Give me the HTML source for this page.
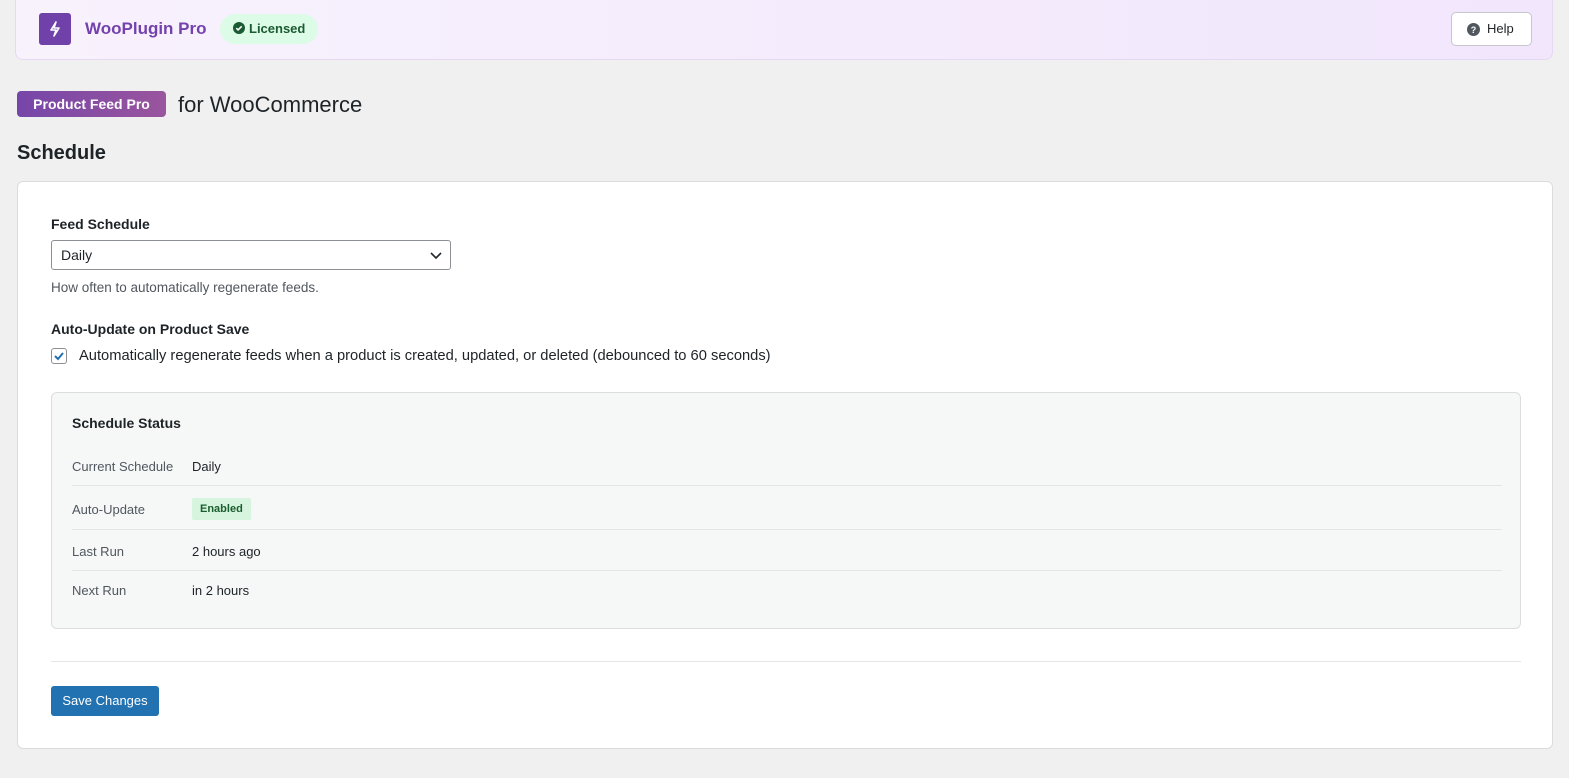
<!DOCTYPE html>
<html><head><style>
*{box-sizing:border-box;margin:0;padding:0}
body{width:1569px;height:778px;background:#f0f0f1;font-family:"Liberation Sans",sans-serif;color:#1d2327;position:relative;overflow:hidden}
.hdr{position:absolute;left:15px;top:0;width:1538px;height:60px;border:1px solid #e6d8f5;border-top:none;border-radius:0 0 8px 8px;background:linear-gradient(90deg,#f8f2fd,#f1e6fc)}
.logo{position:absolute;left:23px;top:13px;width:32px;height:32px;border-radius:3px;background:#7041a8}
.title{position:absolute;left:69px;top:19px;font-size:17px;font-weight:bold;color:#7442ad}
.lic{position:absolute;left:204px;top:14px;height:30px;padding:0 13px 0 13px;border-radius:15px;background:#dcfce7;color:#1c5a32;font-size:13px;font-weight:bold;line-height:30px}
.help{position:absolute;top:12px;right:20px;width:81px;height:34px;background:#fff;border:1px solid #c7c7cc;border-radius:5px;font-size:13px;line-height:32px;padding-left:35px}
.pill{position:absolute;left:17px;top:91px;width:149px;height:26px;border-radius:4px;background:linear-gradient(90deg,#7546a9,#9a559d);color:#fff;font-size:14px;font-weight:bold;line-height:26px;text-align:center}
.forw{position:absolute;left:178px;top:92px;font-size:22px}
h2{position:absolute;left:17px;top:142px;font-size:20px;font-weight:bold}
.card{position:absolute;left:17px;top:181px;width:1536px;height:568px;background:#fff;border:1px solid #dcdcde;border-radius:6px}
.lbl{position:absolute;left:33px;font-size:14px;font-weight:bold}
.sel{position:absolute;left:33px;top:58px;width:400px;height:30px;border:1px solid #8c8f94;border-radius:3px;font-size:14px;line-height:28px;padding-left:9px}
.desc{position:absolute;left:33px;top:98px;font-size:13.5px;color:#50575e}
.cb{position:absolute;left:33px;top:166px;width:16px;height:16px;border:1px solid #8c8f94;border-radius:3px}
.cbt{position:absolute;left:61px;top:166px;font-size:14.7px}
.st{position:absolute;left:33px;top:210px;width:1470px;height:237px;background:#f6f7f7;border:1px solid #dcdcde;border-radius:6px}
.row{position:absolute;left:20px;width:1430px;font-size:13px;border-bottom:1px solid #e5e5e5}
.row span{position:absolute;left:0;color:#50575e}.row b{position:absolute;left:120px;font-weight:normal}
.en{position:absolute;left:120px;top:-4px;background:#d7f5de;color:#1a5d2f;font-size:11px;font-weight:bold;padding:5px 8px;border-radius:2px}
.hr{position:absolute;left:33px;top:479px;width:1470px;border-top:1px solid #e5e5e5}
.btn{position:absolute;left:33px;top:504px;width:108px;height:30px;background:#2271b1;border-radius:3px;color:#fff;font-size:13px;line-height:30px;text-align:center}
</style></head><body>
<div class="hdr">
<div class="logo"><svg width="32" height="32" viewBox="0 0 32 32"><path d="M17 9l-5 8h5l-2 6 5-8h-5z" fill="none" stroke="#fff" stroke-width="1.6" stroke-linejoin="round"/></svg></div>
<div class="title">WooPlugin Pro</div>
<div class="lic"><svg width="12" height="12" viewBox="0 0 12 12" style="vertical-align:-1px;margin-right:4px"><circle cx="6" cy="6" r="6" fill="#1c5a32"/><path d="M3.3 6.2l1.8 1.7 3.6-3.6" stroke="#fff" stroke-width="1.6" fill="none"/></svg>Licensed</div>
<div class="help"><svg width="13" height="13" viewBox="0 0 13 13" style="position:absolute;left:15px;top:10px"><circle cx="6.5" cy="6.5" r="6.5" fill="#50575e"/><text x="6.5" y="10" font-size="9" font-weight="bold" fill="#fff" text-anchor="middle" font-family="Liberation Sans">?</text></svg>Help</div>
</div>
<div class="pill">Product Feed Pro</div>
<div class="forw">for WooCommerce</div>
<h2>Schedule</h2>
<div class="card">
<div class="lbl" style="top:34px">Feed Schedule</div>
<div class="sel">Daily<svg width="12" height="8" viewBox="0 0 12 8" style="position:absolute;right:8px;top:11px"><path d="M1 1l5 5 5-5" stroke="#1d2327" stroke-width="1.6" fill="none"/></svg></div>
<div class="desc">How often to automatically regenerate feeds.</div>
<div class="lbl" style="top:139px">Auto-Update on Product Save</div>
<div class="cb"><svg width="14" height="14" viewBox="0 0 14 14"><path d="M3 7l3 3 5-6" stroke="#2271b1" stroke-width="2" fill="none"/></svg></div>
<div class="cbt">Automatically regenerate feeds when a product is created, updated, or deleted (debounced to 60 seconds)</div>
<div class="st">
<div style="position:absolute;left:20px;top:22px;font-size:14px;font-weight:bold">Schedule Status</div>
<div class="row" style="top:66px;height:27px"><span>Current Schedule</span><b>Daily</b></div>
<div class="row" style="top:109px;height:28px"><span>Auto-Update</span><div class="en">Enabled</div></div>
<div class="row" style="top:151px;height:27px"><span>Last Run</span><b>2 hours ago</b></div>
<div class="row" style="top:190px;border:none"><span>Next Run</span><b>in 2 hours</b></div>
</div>
<div class="hr"></div>
<div class="btn">Save Changes</div>
</div>
</body></html>
